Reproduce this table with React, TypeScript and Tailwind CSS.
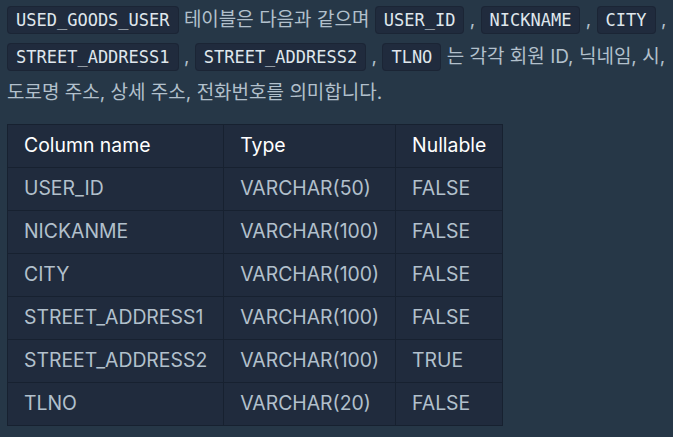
import React from 'react';

const rows: [string, string, string][] = [
  ['USER_ID', 'VARCHAR(50)', 'FALSE'],
  ['NICKANME', 'VARCHAR(100)', 'FALSE'],
  ['CITY', 'VARCHAR(100)', 'FALSE'],
  ['STREET_ADDRESS1', 'VARCHAR(100)', 'FALSE'],
  ['STREET_ADDRESS2', 'VARCHAR(100)', 'TRUE'],
  ['TLNO', 'VARCHAR(20)', 'FALSE'],
];

function Code({ children }: { children: React.ReactNode }) {
  return (
    <code className="rounded-[4px] border border-[#1b2535] bg-[#202b3d] px-[8px] py-[3px] font-['DejaVu_Sans_Mono',monospace] text-[17px] text-[#dfe6ec]">
      {children}
    </code>
  );
}

export default function App() {
  const td = 'border border-[#172130] px-4 h-[43px]';
  return (
    <div className="min-h-[437px] bg-[#263747] pl-[7px] pr-[1px] pt-[2px] font-['Inter','Noto_Sans_CJK_KR',sans-serif] text-[#b2c0cc]">
      <p className="text-[19px] leading-[35.5px]">
        <Code>USED_GOODS_USER</Code> 테이블은 다음과 같으며 <Code>USER_ID</Code> , <Code>NICKNAME</Code> , <Code>CITY</Code> ,{' '}
        <Code>STREET_ADDRESS1</Code> , <Code>STREET_ADDRESS2</Code> , <Code>TLNO</Code> 는 각각 회원 ID, 닉네임, 시, 도로명 주소, 상세 주소, 전화번호를 의미합니다.
      </p>

      {/* column spec */}
      <table className="mt-[13px] border-collapse bg-[#202b3d] text-[19.4px]">
        <thead>
          <tr className="text-white">
            <th className={`${td} text-left font-normal`}>Column name</th>
            <th className={`${td} text-left font-normal`}>Type</th>
            <th className={`${td} text-left font-normal`}>Nullable</th>
          </tr>
        </thead>
        <tbody>
          {rows.map(([name, type, nullable]) => (
            <tr key={name}>
              <td className={td}>{name}</td>
              <td className={td}>{type}</td>
              <td className={td}>{nullable}</td>
            </tr>
          ))}
        </tbody>
      </table>
    </div>
  );
}
